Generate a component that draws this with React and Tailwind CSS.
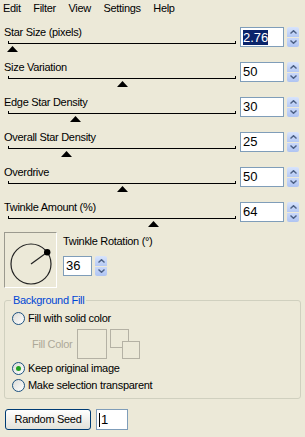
import React from 'react'

const sliders = [
  { label: 'Star Size (pixels)', value: '2.76', pos: 12, selected: true },
  { label: 'Size Variation', value: '50', pos: 122 },
  { label: 'Edge Star Density', value: '30', pos: 75 },
  { label: 'Overall Star Density', value: '25', pos: 66 },
  { label: 'Overdrive', value: '50', pos: 122 },
  { label: 'Twinkle Amount (%)', value: '64', pos: 153 },
]

const Spinner = () => (
  <div className="flex h-[20px] w-[12px] flex-col gap-px">
    <div className="flex flex-1 items-center justify-center rounded-t-[2px] bg-linear-to-b from-[#D8E4FC] to-[#B5C9F4]">
      <svg width="7" height="4" viewBox="0 0 7 4">
        <path d="M0.5 3.5 L3.5 0.7 L6.5 3.5" stroke="#4D6185" strokeWidth="1.4" fill="none" />
      </svg>
    </div>
    <div className="flex flex-1 items-center justify-center rounded-b-[2px] bg-linear-to-b from-[#C9D8FA] to-[#AFC4F2]">
      <svg width="7" height="4" viewBox="0 0 7 4">
        <path d="M0.5 0.5 L3.5 3.3 L6.5 0.5" stroke="#4D6185" strokeWidth="1.4" fill="none" />
      </svg>
    </div>
  </div>
)

const SliderRow = ({ label, value, pos, selected }) => (
  <div className="flex h-[35px]">
    <div className="relative w-[240px]">
      <div className="pl-[4px] pt-[4px] leading-[13px]">{label}</div>
      <div className="ml-[8px] mt-[2px] h-[3px] w-[228px] border-x border-b border-black" />
      <svg className="absolute top-[24px]" style={{ left: pos - 5.5 }} width="11" height="6" viewBox="0 0 11 6">
        <polygon points="0,6 5.5,0 11,6" fill="#000" />
      </svg>
    </div>
    <div className="mt-[5px] flex h-[20px] w-[44px] items-center border border-[#7F9DB9] bg-white pl-[2px] text-[13px] tracking-normal">
      {selected ? <span className="bg-[#0A246A] leading-[15px] text-white">{value}</span> : value}
    </div>
    <div className="ml-[3px] mt-[5px]">
      <Spinner />
    </div>
  </div>
)

const Radio = ({ checked }) => (
  <div className="flex h-[13px] w-[13px] items-center justify-center rounded-full border border-[#1C5180] bg-linear-to-br from-[#DCDCD7] to-white">
    {checked && <div className="h-[5px] w-[5px] rounded-full bg-[#21A121]" />}
  </div>
)

export default function App() {
  return (
    <div className="h-[437px] w-[305px] overflow-hidden bg-[#ECE9D8] font-['Liberation_Sans',Arial,sans-serif] text-[11px] tracking-[-0.3px] text-black">
      <div className="flex h-[22px] gap-[12.5px] pl-[3px] pt-[2px] leading-[13px]">
        <span>Edit</span>
        <span>Filter</span>
        <span>View</span>
        <span>Settings</span>
        <span>Help</span>
      </div>

      {sliders.map((s) => (
        <SliderRow key={s.label} {...s} />
      ))}

      <div className="flex h-[56px] pl-[4px]">
        <div className="h-[56px] w-[53px] border border-b-white border-l-[#9B9A8F] border-r-white border-t-[#9B9A8F]">
          <svg width="51" height="54" viewBox="0 0 51 54">
            <circle cx="26" cy="31" r="20" fill="none" stroke="#222" strokeWidth="1.2" />
            <line x1="26" y1="31" x2="42.2" y2="19.2" stroke="#222" strokeWidth="1.2" />
            <circle cx="42.2" cy="19.2" r="3.2" fill="#000" />
          </svg>
        </div>
        <div className="ml-[6px] pt-[3px]">
          <div className="leading-[13px]">Twinkle Rotation (°)</div>
          <div className="mt-[8px] flex">
            <div className="flex h-[20px] w-[29px] items-center border border-[#7F9DB9] bg-white pl-[2px] text-[13px] tracking-normal">
              36
            </div>
            <div className="ml-[3px]">
              <Spinner />
            </div>
          </div>
        </div>
      </div>

      <fieldset className="ml-[4px] mt-[6px] w-[297px] rounded-[3px] border border-[#D0D0BF] pb-[4px]">
        <legend className="ml-[6px] px-[2px] leading-[13px] text-[#0046D5]">Background Fill</legend>
        <div className="mt-[3px] flex h-[17px] items-center gap-[3px] pl-[7px]">
          <Radio />
          <span className="leading-[13px]">Fill with solid color</span>
        </div>
        <div className="mt-[2px] flex h-[30px] items-center pl-[27px]">
          <span className="w-[45px] leading-[13px] text-[#ACA899]">Fill Color</span>
          <div className="h-[30px] w-[30px] border border-[#B4B1A4]" />
          <div className="relative ml-[3px] h-[30px] w-[30px]">
            <div className="absolute left-0 top-0 h-[19px] w-[19px] border border-[#B4B1A4]" />
            <div className="absolute left-[12px] top-[12px] h-[18px] w-[18px] border border-[#B4B1A4] bg-[#ECE9D8]" />
          </div>
        </div>
        <div className="mt-[1px] flex h-[17px] items-center gap-[3px] pl-[7px]">
          <Radio checked />
          <span className="leading-[13px]">Keep original image</span>
        </div>
        <div className="flex h-[17px] items-center gap-[3px] pl-[7px]">
          <Radio />
          <span className="leading-[13px]">Make selection transparent</span>
        </div>
      </fieldset>

      <div className="ml-[5px] mt-[10px] flex gap-[5px]">
        <button className="h-[21px] w-[86px] rounded-[3px] border border-[#003C74] bg-linear-to-b from-white to-[#E3E2DA] leading-[13px]">
          Random Seed
        </button>
        <div className="flex h-[21px] w-[32px] items-center border border-[#7F9DB9] bg-white pl-[2px] text-[13px] tracking-normal">
          <span className="mr-px h-[14px] w-px bg-black" />
          1
        </div>
      </div>
    </div>
  )
}
